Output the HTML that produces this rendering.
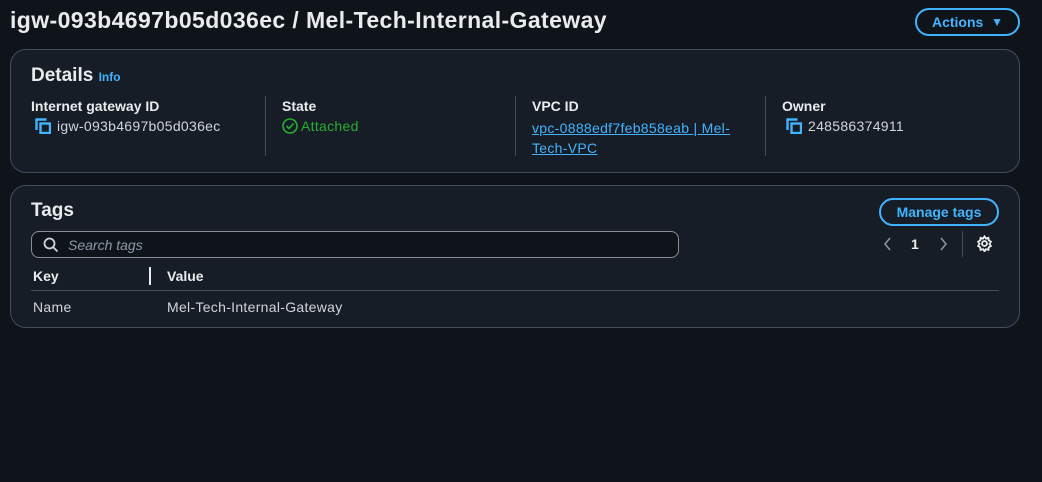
<!DOCTYPE html>
<html><head><style>
*{margin:0;padding:0;box-sizing:border-box}
body{width:1042px;height:482px;background:#0f141a;font-family:"Liberation Sans",Arial,sans-serif;color:#d1d5db;position:relative;overflow:hidden;font-size:14px}
.abs{position:absolute}
h1{position:absolute;left:10px;top:7px;font-size:23px;font-weight:bold;color:#e9ebed;letter-spacing:0.4px;white-space:nowrap}
.btn{position:absolute;border:2px solid #42b4ff;border-radius:20px;color:#42b4ff;font-weight:bold;font-size:14px;display:flex;align-items:center;justify-content:center}
.card{position:absolute;left:10px;width:1010px;border:1px solid #414d5c;border-radius:16px;background:#161d26}
.lbl{position:absolute;font-weight:bold;color:#e9ebed;font-size:14px}
.val{position:absolute;color:#d1d5db;font-size:14px;white-space:nowrap;letter-spacing:0.3px}
.vline{position:absolute;width:1px;background:#414d5c}
.copy{display:inline-block;vertical-align:-3px;margin-right:6px}
a{color:#42b4ff;text-decoration:underline}
</style></head><body>
<h1>igw-093b4697b05d036ec / Mel-Tech-Internal-Gateway</h1>
<div class="btn" style="left:915px;top:8px;width:105px;height:28px">Actions&nbsp;&nbsp;<span style="font-size:12px">▼</span></div>

<div class="card" style="top:49px;height:124px"></div>
<div class="abs" style="left:31px;top:65px;font-size:19px;font-weight:bold;color:#e9ebed">Details <span style="font-size:12px;color:#42b4ff">Info</span></div>
<div class="lbl" style="left:31px;top:98px">Internet gateway ID</div>
<div class="val" style="left:35px;top:118px"><svg class="copy" width="16" height="16" viewBox="0 0 16 16" fill="none" stroke="#42b4ff" stroke-width="2.4"><path d="M1.5 12V1.5h10"/><rect x="5.5" y="5.5" width="9.5" height="9.5"/></svg>igw-093b4697b05d036ec</div>
<div class="vline" style="left:265px;top:96px;height:60px"></div>
<div class="lbl" style="left:282px;top:98px">State</div>
<div class="val" style="left:282px;top:118px;color:#29ad32"><svg class="copy" style="margin-right:3px" width="16" height="16" viewBox="0 0 16 16" fill="none" stroke="#29ad32" stroke-width="1.6"><circle cx="8" cy="8" r="7"/><path d="M4.5 8l2.5 2.5 4.5-5"/></svg>Attached</div>
<div class="vline" style="left:515px;top:96px;height:60px"></div>
<div class="lbl" style="left:532px;top:98px">VPC ID</div>
<div class="val" style="left:532px;top:118px;line-height:20px"><a>vpc-0888edf7feb858eab | Mel-</a><br><a>Tech-VPC</a></div>
<div class="vline" style="left:765px;top:96px;height:60px"></div>
<div class="lbl" style="left:782px;top:98px">Owner</div>
<div class="val" style="left:786px;top:118px"><svg class="copy" width="16" height="16" viewBox="0 0 16 16" fill="none" stroke="#42b4ff" stroke-width="2.4"><path d="M1.5 12V1.5h10"/><rect x="5.5" y="5.5" width="9.5" height="9.5"/></svg>248586374911</div>

<div class="card" style="top:185px;height:143px"></div>
<div class="abs" style="left:31px;top:200px;font-size:19px;font-weight:bold;color:#e9ebed">Tags</div>
<div class="btn" style="left:879px;top:198px;width:120px;height:28px">Manage tags</div>
<div class="abs" style="left:31px;top:231px;width:648px;height:27px;border:1px solid #8c8c94;border-radius:8px;background:#0f141a"></div>
<svg class="abs" style="left:43px;top:237px" width="16" height="16" viewBox="0 0 16 16" fill="none" stroke="#d1d5db" stroke-width="1.8"><circle cx="6.5" cy="6.5" r="5"/><path d="M10 10l4.5 4.5"/></svg>
<div class="abs" style="left:68px;top:237px;font-style:italic;color:#8d99a8;font-size:14px">Search tags</div>
<svg class="abs" style="left:883px;top:237px" width="10" height="14" viewBox="0 0 10 14" fill="none" stroke="#8d99a8" stroke-width="1.5"><path d="M7 1L2 7l5 6"/></svg>
<div class="abs" style="left:911px;top:236px;font-weight:bold;color:#e9ebed;font-size:14px">1</div>
<svg class="abs" style="left:938px;top:237px" width="10" height="14" viewBox="0 0 10 14" fill="none" stroke="#8d99a8" stroke-width="1.5"><path d="M3 1l5 6-5 6"/></svg>
<div class="vline" style="left:962px;top:231px;height:26px"></div>
<svg class="abs" style="left:976px;top:235px" width="17" height="17" viewBox="0 0 24 24" fill="none" stroke="#e9ebed" stroke-width="2.6"><circle cx="12" cy="12" r="3.5"/><path d="M12 2l2 3 3.5-1 .5 3.5 3 2-2 3 2 3-3 2-.5 3.5-3.5-1-2 3-2-3-3.5 1-.5-3.5-3-2 2-3-2-3 3-2 .5-3.5 3.5 1z"/></svg>
<div class="abs" style="left:33px;top:268px;font-weight:bold;color:#e9ebed">Key</div>
<div class="abs" style="left:149px;top:267px;width:2px;height:18px;background:#e9ebed"></div>
<div class="abs" style="left:167px;top:268px;font-weight:bold;color:#e9ebed">Value</div>
<div class="abs" style="left:31px;top:290px;width:968px;height:1px;background:#414d5c"></div>
<div class="val" style="left:33px;top:299px">Name</div>
<div class="val" style="left:167px;top:299px">Mel-Tech-Internal-Gateway</div>
</body></html>
